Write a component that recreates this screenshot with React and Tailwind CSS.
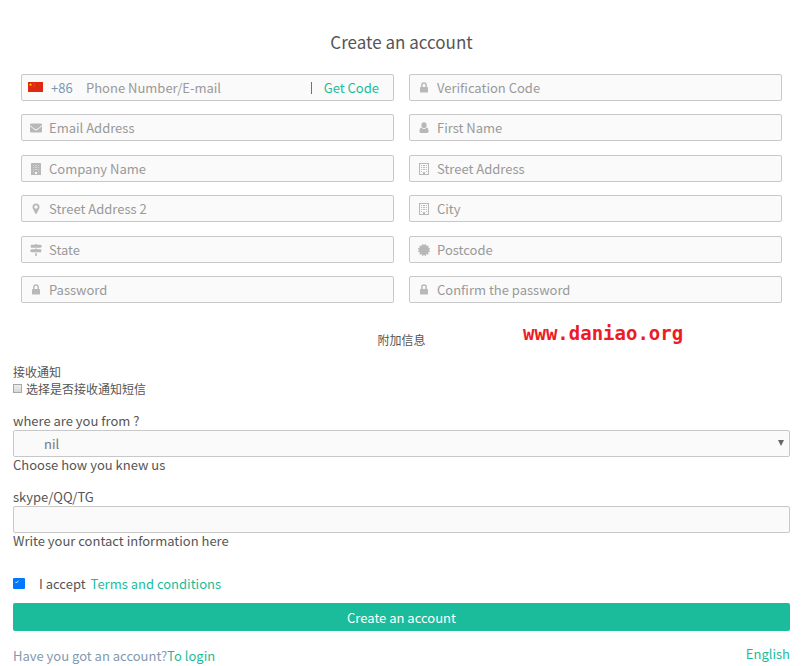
import React from "react";
import { FaEnvelope, FaMapSigns, FaCertificate } from "react-icons/fa";

const box = "h-[27px] rounded-xs border border-[#c8c8c8] bg-[#fafafa]";
const line = "block pb-[2px] leading-[15px]";
const smallLine = "pb-[2px] text-xs leading-[15px]";

function UserIcon({ className }) {
  return (
    <svg viewBox="0 0 12 12" fill="currentColor" className={className} aria-hidden="true">
      <ellipse cx="6" cy="3.2" rx="2.6" ry="2.9" />
      <path d="M3.200 5.600C1.900 6 1.500 7.600 1.500 9.200c0 1.200.7 1.800 1.600 1.800h5.800c.9 0 1.600-.6 1.600-1.800 0-1.600-.4-3.200-1.700-3.600-.8.9-1.700 1.300-2.800 1.300s-2-.4-2.800-1.300Z" />
    </svg>
  );
}

function LockIcon({ className }) {
  return (
    <svg viewBox="0 0 12 12" className={className} aria-hidden="true">
      <path d="M3.8 5V3.200a2.200 2.200 0 0 1 4.400 0V5" fill="none" stroke="currentColor" strokeWidth="1.5" />
      <rect x="2" y="5" width="8" height="5.5" rx="0.6" fill="currentColor" />
    </svg>
  );
}

function PinIcon({ className }) {
  return (
    <svg viewBox="0 0 12 12" fill="currentColor" className={className} aria-hidden="true">
      <path
        fillRule="evenodd"
        d="M6 .5A3.5 3.5 0 0 0 2.5 4c0 .8.2 1.3.5 1.9l2.4 4.8c.2.5 1 .5 1.2 0L9 5.9c.3-.6.5-1.1.5-1.9A3.5 3.5 0 0 0 6 .5Zm0 1.800a1.700 1.700 0 1 1 0 3.400 1.700 1.700 0 0 1 0-3.400Z"
      />
    </svg>
  );
}

function BuildingIcon({ className }) {
  return (
    <svg viewBox="0 0 12 12" className={className} aria-hidden="true">
      <rect x="1" width="10" height="12" rx="0.5" fill="currentColor" />
      <path
        d="M3 2h1v1H3zM5 2h2v1H5zM8 2h1v1H8zM3 4h1v1H3zM5 4h2v1H5zM8 4h1v1H8zM3 6h1v1H3zM5 6h2v1H5zM8 6h1v1H8zM3 8h1v1H3zM8 8h1v1H8z"
        fill="#d6d6d6"
      />
      <path d="M5 9h2v2H5z" fill="#fafafa" />
    </svg>
  );
}

function BuildingOutlineIcon({ className }) {
  return (
    <svg viewBox="0 0 12 12" className={className} aria-hidden="true">
      <rect x="1.5" y="0.5" width="9" height="11" fill="none" stroke="currentColor" />
      <path
        d="M3 2h1v1H3zM5 2h2v1H5zM8 2h1v1H8zM3 4h1v1H3zM5 4h2v1H5zM8 4h1v1H8zM3 6h1v1H3zM5 6h2v1H5zM8 6h1v1H8zM3 8h1v1H3zM8 8h1v1H8zM5 9h2v2H5z"
        fill="currentColor"
      />
    </svg>
  );
}

function Flag() {
  return (
    <svg viewBox="0 0 15 10" className="mb-[2px] h-[10px] w-[15px] shrink-0" aria-hidden="true">
      <rect width="15" height="10" fill="#de2910" />
      <path d="M2.5 1l.4 1.1h1.2l-1 .7.4 1.2-1-.7-1 .7.4-1.2-1-.7h1.2Z" fill="#ffde00" />
      <path d="M5 .8h.6v.5H5zM6 1.8h.6v.5H6zM6 3.1h.6v.5H6zM5 4h.6v.5H5z" fill="#ffb000" />
    </svg>
  );
}

function Field({ label, icon: Icon, type = "text" }) {
  return (
    <label className={`${box} flex items-center pl-2`}>
      <Icon className="mr-[7px] h-3 w-3 shrink-0 text-[#b8b8b8]" />
      <input
        type={type}
        placeholder={label}
        aria-label={label}
        className="w-full min-w-0 bg-transparent leading-[17px] outline-none placeholder:text-[#999999]"
      />
    </label>
  );
}

function PhoneField() {
  return (
    <div className={`${box} flex items-center pl-[6px] pr-[14px]`}>
      <Flag />
      <span className="ml-2 w-[35px] shrink-0 text-[#7b98b2]">+86</span>
      <input
        placeholder="Phone Number/E-mail"
        aria-label="Phone Number/E-mail"
        className="w-full min-w-0 bg-transparent leading-[17px] outline-none placeholder:text-[#999999]"
      />
      <span className="mr-3 h-3 w-px shrink-0 bg-[#c0504c]" />
      <button type="button" className="shrink-0 text-[#1bbc9b]">Get Code</button>
    </div>
  );
}

function Row({ children }) {
  return <div className="grid grid-cols-2 gap-x-[15px] odd:mb-[13px] even:mb-[14px] last:mb-0">{children}</div>;
}

export default function App() {
  return (
    <main className="bg-white pl-[13px] pr-[14px] pt-[30px] font-['Noto_Sans_CJK_SC',sans-serif] text-[13px] leading-[17px] text-[#555555]">
      <form>
        <h1 className="mb-5 text-center text-[17px] leading-6">Create an account</h1>
        <div className="px-2">
          <Row>
            <PhoneField />
            <Field label="Verification Code" icon={LockIcon} />
          </Row>
          <Row>
            <Field label="Email Address" icon={FaEnvelope} type="email" />
            <Field label="First Name" icon={UserIcon} />
          </Row>
          <Row>
            <Field label="Company Name" icon={BuildingIcon} />
            <Field label="Street Address" icon={BuildingOutlineIcon} />
          </Row>
          <Row>
            <Field label="Street Address 2" icon={PinIcon} />
            <Field label="City" icon={BuildingOutlineIcon} />
          </Row>
          <Row>
            <Field label="State" icon={FaMapSigns} />
            <Field label="Postcode" icon={FaCertificate} />
          </Row>
          <Row>
            <Field label="Password" icon={LockIcon} type="password" />
            <Field label="Confirm the password" icon={LockIcon} type="password" />
          </Row>
        </div>

        <div className="relative mt-[29px] mb-[15px] text-center">
          <h2 className={smallLine}>附加信息</h2>
          <span className="absolute -top-[11px] left-[510px] font-['DejaVu_Sans_Mono',monospace] text-[19px] leading-6 font-bold text-[#ed1c24]">
            www.daniao.org
          </span>
        </div>

        <p className={smallLine}>接收通知</p>
        <label className={`${smallLine} flex items-center gap-1`}>
          <input
            type="checkbox"
            className="h-[9px] w-[9px] appearance-none border border-[#a8a8a8] bg-linear-to-b from-[#eeeeee] to-[#d8d8d8]"
          />
          选择是否接收通知短信
        </label>

        <label htmlFor="source" className={`${line} mt-[15px]`}>where are you from ?</label>
        <div className="relative">
          <select id="source" className={`${box} block w-full appearance-none pl-[30px] text-[#777777]`}>
            <option>nil</option>
          </select>
          <svg viewBox="0 0 6 6" className="pointer-events-none absolute top-[10px] right-[6px] h-[6px] w-[6px]" aria-hidden="true">
            <path d="M0 0h6L3 6Z" fill="#666666" />
          </svg>
        </div>
        <p className={line}>Choose how you knew us</p>

        <label htmlFor="contact" className={`${line} mt-[15px]`}>skype/QQ/TG</label>
        <input id="contact" className={`${box} block w-full px-2`} />
        <p className={line}>Write your contact information here</p>

        <div className="mt-[26px] mb-[10px] flex items-center pb-[2px] leading-[15px]">
          <span className="relative mr-[14px] h-[11px] w-3">
            <input
              id="terms"
              type="checkbox"
              defaultChecked
              className="block h-[11px] w-3 appearance-none rounded-[1px] bg-[#0078ff]"
            />
            <svg viewBox="0 0 4 4" className="pointer-events-none absolute top-[2px] left-[2px] h-1 w-1" aria-hidden="true">
              <path d="M.3 1.8 1.4 3 3.5.6" fill="none" stroke="white" strokeWidth="0.8" />
            </svg>
          </span>
          <label htmlFor="terms" className="mr-[5px]">I accept</label>
          <a href="#terms" className="text-[#1bbc9b]">Terms and conditions</a>
        </div>

        <button type="submit" className="block h-7 w-full rounded-xs bg-[#1bbc9b] text-white">Create an account</button>
      </form>

      <footer className="mt-[14px] flex justify-between">
        <p className="pt-[2px] text-[#8399af]">
          Have you got an account?<a href="#login" className="text-[#1bbc9b]">To login</a>
        </p>
        <a href="#english" className="text-[#1bbc9b]">English</a>
      </footer>
    </main>
  );
}
